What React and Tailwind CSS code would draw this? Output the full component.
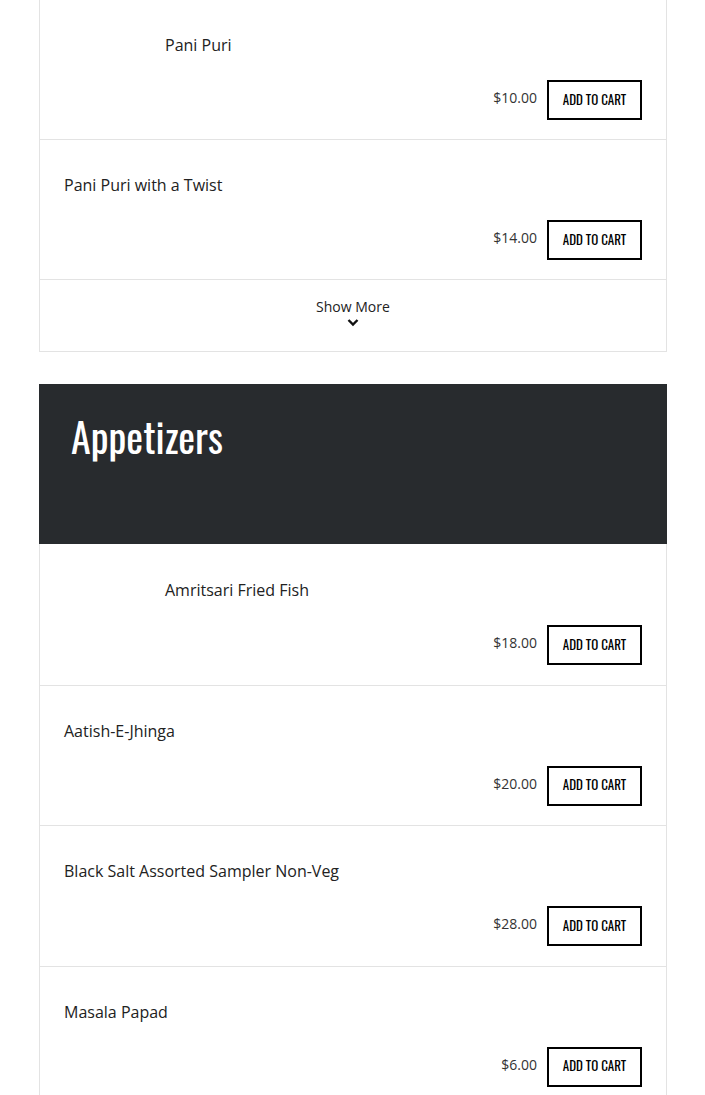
import React from "react";

const open = { fontFamily: '"Open Sans", "Noto Sans", sans-serif' };
const cond = { fontFamily: 'Oswald, "Liberation Sans Narrow", "DejaVu Sans Condensed", "Roboto Condensed", sans-serif' };

function Item({ name, price, img, half }) {
  return (
    <div className={`border-b border-[#e3e3e3] px-6 pt-[33px] ${half ? "pb-[19.5px]" : "pb-[19px]"}`}>
      <div className="flex">
        {img && <div className="w-[101px] shrink-0" />}
        <div className="text-[16px] leading-6 text-[#222]" style={open}>{name}</div>
      </div>
      <div className="mt-[23px] flex items-center justify-end gap-[10px]">
        <span className="mb-[5px] text-[14px] text-[#333]" style={open}>{price}</span>
        <button className="h-10 w-[95px] border-2 border-black bg-white pb-px text-[13px] uppercase text-black" style={cond}>
          Add to Cart
        </button>
      </div>
    </div>
  );
}

export default function App() {
  return (
    <div className="min-h-[1095px] bg-white pb-10">
      <div className="-mt-px ml-[39px] w-[628px] border border-[#e3e3e3]">
        <Item name="Pani Puri" price="$10.00" img />
        <Item name="Pani Puri with a Twist" price="$14.00" />
        <div className="flex h-[71px] flex-col items-center pt-[17px]">
          <span className="text-[14px] leading-5 text-[#222]" style={open}>Show More</span>
          <svg width="12" height="9" viewBox="0 0 12 9" className="mt-[1px]">
            <path d="M1.5 2 L6 6.5 L10.5 2" fill="none" stroke="#111" strokeWidth="2.4" />
          </svg>
        </div>
      </div>

      <div className="ml-[39px] mt-8 w-[628px]">
        <div className="h-40 bg-[#282b2e] px-8 pt-[22px]">
          <h2 className="text-[40px] leading-[60px] text-white" style={cond}>Appetizers</h2>
        </div>
        <div className="border-x border-[#e3e3e3] pt-px">
          <Item name="Amritsari Fried Fish" price="$18.00" img half />
          <Item name="Aatish-E-Jhinga" price="$20.00" half />
          <Item name="Black Salt Assorted Sampler Non-Veg" price="$28.00" half />
          <Item name="Masala Papad" price="$6.00" half />
        </div>
      </div>
    </div>
  );
}
